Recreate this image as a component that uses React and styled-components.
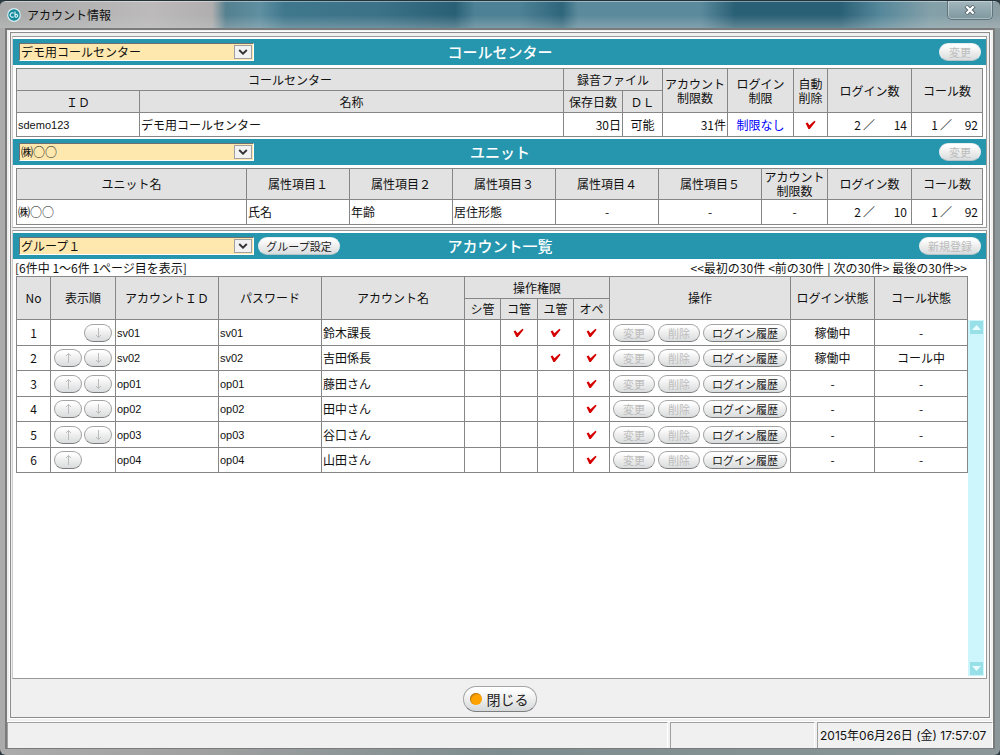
import React, { useState } from "react";
import styled, { createGlobalStyle, css } from "styled-components";

const GlobalStyle = createGlobalStyle`
  * {
    box-sizing: border-box;
  }
  body {
    margin: 0;
    background: #2c3a40;
    color: #111;
    font-family: "Noto Sans CJK JP", sans-serif;
    font-size: 12px;
    line-height: 14px;
  }
  button, select {
    font-family: inherit;
    font-size: 12px;
    line-height: 14px;
  }
`;

const Window = styled.div`
  display: flex;
  flex-direction: column;
  min-height: 100vh;
  padding: 0 5px 6px;
  border-top: 1px solid #24323a;
  border-radius: 6px;
  background:
    linear-gradient(transparent 14px, rgba(200, 205, 205, 0.35) 27px, transparent 27px),
    linear-gradient(90deg, #a9a9a9 0, #bcbaba 150px, #b0aeae 212px, #54808f 226px, #5f8fa1 260px, #3f778d 285px, #3b7288 380px, #2a6076 455px, #4d8195 475px, #4d8195 520px, #2f667c 562px, #5b8a9c 578px, #5b8a9c 700px, #2a6076 735px, #2a6076 840px, #55879a 880px, #83a0a9 930px, #8b9da3 100%) 0 0 / 100% 27px no-repeat,
    linear-gradient(90deg, #ababab 0, #a0a0a0 20%, #7d8c8e 50%, #8b9799 100%);
`;
const TitleBar = styled.header`
  display: flex;
  align-items: center;
  gap: 6px;
  height: 27px;
  padding-left: 2px;
  box-shadow: inset 0 1px 0 rgba(255, 255, 255, 0.4);
`;
const Title = styled.h1`
  flex: 1;
  margin: 0;
  font-size: 12px;
  font-weight: 400;
`;
const CloseBox = styled.button`
  display: flex;
  align-items: center;
  justify-content: center;
  align-self: flex-start;
  width: 46px;
  height: 19px;
  margin-right: 2px;
  padding: 0;
  border: 1px solid #5f747c;
  border-top: none;
  border-radius: 0 0 5px 5px;
  background: linear-gradient(#a3b7bd, #7e979f);
  box-shadow: inset 0 0 0 1px rgba(255, 255, 255, 0.35);
`;
const Client = styled.div`
  display: flex;
  flex: 1;
  flex-direction: column;
  border: 2px solid #7b7b7b;
  border-bottom-width: 1px;
  background: #f0f0f0;
`;
const Frame = styled.main`
  display: flex;
  flex: 1;
  flex-direction: column;
  gap: 2px;
  margin: 2px 3px 3px;
  padding: 3px 2px 0 1px;
  border: 1px solid #8c8c8c;
  box-shadow: 0 0 0 1px #fff;
`;
const Panel = styled.section`
  display: flex;
  flex: ${(props) => (props.$grow ? "1" : "none")};
  flex-direction: column;
  padding-top: 2px;
  border: 1px solid #999;
  border-left-color: #ccc;
  background: #fff;
`;
const Bar = styled.div`
  display: grid;
  grid-template-columns: 1fr auto 1fr;
  align-items: center;
  height: 26px;
  padding: 0 5px 0 6px;
  background: #2596ae;
`;
const BarLeft = styled.div`
  display: flex;
  align-items: center;
  gap: 4px;
`;
const BarTitle = styled.h2`
  margin: 0;
  color: #fff;
  font-size: 15px;
  font-weight: 500;
  line-height: 20px;
`;
const BarRight = styled.div`
  display: flex;
  justify-content: flex-end;
`;
const SelectBox = styled.div`
  display: flex;
  position: relative;
  width: 235px;
  height: 18px;
  border: 1px solid #fff;
  border-top-color: #6f6f6f;
  border-left-color: #6f6f6f;
  background: #ffe8ae;
`;
const Select = styled.select`
  flex: 1;
  min-width: 0;
  padding: 0 20px 0 1px;
  border: none;
  border-radius: 0;
  outline: none;
  appearance: none;
  background: transparent;
  color: #111;
`;
const SelectArrow = styled.span`
  display: flex;
  position: absolute;
  top: 1px;
  right: 1px;
  align-items: center;
  justify-content: center;
  width: 18px;
  height: 14px;
  border: 1px solid #a0a0a0;
  background: #f2f2f2;
  pointer-events: none;
`;
const widths = { arrow: "28px", normal: "42px", group: "82px", entry: "62px", history: "84px" };
const PillButton = styled.button`
  display: inline-flex;
  align-items: center;
  justify-content: center;
  flex: none;
  width: ${(props) => widths[props.$size || "normal"]};
  height: 18px;
  padding: 0;
  border: 1px solid #a4a4a4;
  border-bottom-color: #7d7d7d;
  border-radius: 9px;
  background: linear-gradient(#fff 10%, #eee 50%, #d9dcdd);
  color: #222;
  font-size: 11px;
  white-space: nowrap;
  &:disabled {
    color: #bcbcbc;
  }
  ${(props) =>
    props.$onBar &&
    css`
      border-color: #e8eeee;
      border-bottom-color: #b4c4c8;
    `}
`;
const TableArea = styled.div`
  padding: 3px 3px 2px;
`;
const Table = styled.table`
  width: 100%;
  table-layout: fixed;
  border-collapse: collapse;
`;
const Th = styled.th`
  height: ${(props) => props.$h || 22}px;
  padding: 0;
  border: 1px solid #868686;
  background: #e2e2e2;
  font-weight: 400;
  line-height: 14px;
`;
const Td = styled.td`
  height: ${(props) => props.$h || 25}px;
  padding: 0 1px;
  border: 1px solid #868686;
  background: #fff;
  color: ${(props) => (props.$blue ? "#00f" : "#111")};
  text-align: ${(props) => props.$align || "left"};
  white-space: pre;
`;
const IdCell = styled(Td)`
  font-family: "Liberation Sans", sans-serif;
  font-size: 11px;
`;
const Ratio = styled.span`
  display: grid;
  grid-template-columns: 1fr 14px ${(props) => (props.$wide ? "32px" : "26px")};
  padding-right: 3px;
  text-align: right;
`;
const PageRow = styled.nav`
  display: flex;
  justify-content: space-between;
  height: 17px;
  padding: 2px 19px 0 2px;
`;
const PageLinks = styled.div`
  display: flex;
  gap: 3px;
`;
const PageLink = styled.a`
  color: #111;
  text-decoration: none;
`;
const ListArea = styled.div`
  display: flex;
  flex: 1;
  padding: 0 2px 2px 3px;
`;
const ListTable = styled.div`
  flex: 1;
  min-width: 0;
`;
const ListRow = styled.tr`
  height: 26px;
  &:nth-child(even) {
    height: 25px;
  }
`;
const Actions = styled.div`
  display: flex;
  gap: ${(props) => props.$gap}px;
  justify-content: ${(props) => props.$justify};
  padding: 0 2px;
`;
const ScrollBar = styled.div`
  display: flex;
  flex-direction: column;
  justify-content: space-between;
  align-items: center;
  width: 16px;
  margin-top: 44px;
  padding: 1px 0;
  background: #ccf5fc;
`;
const ScrollButton = styled.button`
  display: flex;
  align-items: center;
  justify-content: center;
  width: 13px;
  height: 13px;
  padding: 0;
  border: none;
  background: #97e0e8;
`;
const Footer = styled.footer`
  display: flex;
  align-items: center;
  justify-content: center;
  height: 36px;
`;
const CloseButton = styled.button`
  display: flex;
  align-items: center;
  gap: 5px;
  height: 26px;
  padding: 0 7px 0 6px;
  border: 1px solid #a4a4a4;
  border-bottom-color: #7d7d7d;
  border-radius: 13px;
  background: linear-gradient(#fff 10%, #eee 50%, #d5d9da);
  color: #222;
  font-size: 14px;
`;
const Dot = styled.span`
  width: 12px;
  height: 12px;
  border-radius: 50%;
  background: #ffa200;
  box-shadow: inset 1px 1px 1px #b87a18;
`;
const StatusBar = styled.div`
  display: grid;
  grid-template-columns: 1fr 145px 176px;
  gap: 2px;
  height: 27px;
  border-top: 1px solid #fff;
`;
const StatusCell = styled.div`
  display: flex;
  align-items: center;
  padding-left: 2px;
  border-top: 1px solid #a0a0a0;
  border-left: 1px solid #a0a0a0;
  border-right: 1px solid #fff;
  font-family: Inter, "Noto Sans CJK JP", sans-serif;
  white-space: nowrap;
`;

const accounts = [
  { id: "sv01", name: "鈴木課長", roles: [0, 1, 1, 1], login: "稼働中", call: "-" },
  { id: "sv02", name: "吉田係長", roles: [0, 0, 1, 1], login: "稼働中", call: "コール中" },
  { id: "op01", name: "藤田さん", roles: [0, 0, 0, 1], login: "-", call: "-" },
  { id: "op02", name: "田中さん", roles: [0, 0, 0, 1], login: "-", call: "-" },
  { id: "op03", name: "谷口さん", roles: [0, 0, 0, 1], login: "-", call: "-" },
  { id: "op04", name: "山田さん", roles: [0, 0, 0, 1], login: "-", call: "-" },
];

const Check = () => (
  <svg width="11" height="10" viewBox="0 0 11 10" role="img" aria-label="可">
    <path d="M0.6 3.2 2.6 2.6 4.4 5.2 9.4 0.8 10.6 1.8 4.8 9 3.4 9z" fill="#d40000" />
  </svg>
);

const Arrow = ({ up }) => (
  <svg width="7" height="12" viewBox="0 0 7 12">
    <path
      d={up ? "M3.5 11V1.5M1 4 3.5 1.5 6 4" : "M3.5 1v9.5M1 8l2.5 2.5L6 8"}
      fill="none"
      stroke="#bbb"
    />
  </svg>
);

const Triangle = ({ down }) => (
  <svg width="9" height="5" viewBox="0 0 9 5">
    <path d={down ? "M0 0h9L4.5 5z" : "M0 5h9L4.5 0z"} fill="#eafcff" />
  </svg>
);

function Cols({ list }) {
  return (
    <colgroup>
      {list.map((width, index) => (
        <col key={index} style={width ? { width } : undefined} />
      ))}
    </colgroup>
  );
}

function Picker({ label, options }) {
  const [value, setValue] = useState(options[0]);
  return (
    <SelectBox>
      <Select aria-label={label} value={value} onChange={(e) => setValue(e.target.value)}>
        {options.map((option) => (
          <option key={option}>{option}</option>
        ))}
      </Select>
      <SelectArrow>
        <svg width="10" height="6" viewBox="0 0 10 6">
          <path d="M1.2 1 5 4.6 8.8 1" fill="none" stroke="#333" strokeWidth="1.9" />
        </svg>
      </SelectArrow>
    </SelectBox>
  );
}

function Count({ now, max, wide }) {
  return (
    <Ratio $wide={wide}>
      <span>{now}</span>
      <span>／</span>
      <span>{max}</span>
    </Ratio>
  );
}

function CenterTable() {
  return (
    <Table>
      <Cols list={[123, 0, 59, 40, 65, 66, 34, 84, 71]} />
      <thead>
        <tr>
          <Th colSpan={2}>コールセンター</Th>
          <Th colSpan={2}>録音ファイル</Th>
          <Th rowSpan={2}>アカウント<br />制限数</Th>
          <Th rowSpan={2}>ログイン<br />制限</Th>
          <Th rowSpan={2}>自動<br />削除</Th>
          <Th rowSpan={2}>ログイン数</Th>
          <Th rowSpan={2}>コール数</Th>
        </tr>
        <tr>
          <Th>ＩＤ</Th>
          <Th>名称</Th>
          <Th>保存日数</Th>
          <Th>ＤＬ</Th>
        </tr>
      </thead>
      <tbody>
        <tr>
          <IdCell $h={24}>sdemo123</IdCell>
          <Td $h={24}>デモ用コールセンター</Td>
          <Td $h={24} $align="right">30日</Td>
          <Td $h={24} $align="center">可能</Td>
          <Td $h={24} $align="right">31件</Td>
          <Td $h={24} $align="center" $blue>制限なし</Td>
          <Td $h={24} $align="center"><Check /></Td>
          <Td $h={24}><Count now={2} max={14} wide /></Td>
          <Td $h={24}><Count now={1} max={92} /></Td>
        </tr>
      </tbody>
    </Table>
  );
}

function UnitTable() {
  return (
    <Table>
      <Cols list={[0, 103, 103, 103, 103, 103, 66, 84, 71]} />
      <thead>
        <tr>
          <Th $h={31}>ユニット名</Th>
          {["１", "２", "３", "４", "５"].map((no) => (
            <Th key={no}>属性項目{no}</Th>
          ))}
          <Th>アカウント<br />制限数</Th>
          <Th>ログイン数</Th>
          <Th>コール数</Th>
        </tr>
      </thead>
      <tbody>
        <tr>
          <Td>㈱○○</Td>
          <Td>氏名</Td>
          <Td>年齢</Td>
          <Td>居住形態</Td>
          <Td $align="center">-</Td>
          <Td $align="center">-</Td>
          <Td $align="center">-</Td>
          <Td><Count now={2} max={10} wide /></Td>
          <Td><Count now={1} max={92} /></Td>
        </tr>
      </tbody>
    </Table>
  );
}

function AccountTable() {
  return (
    <Table>
      <Cols list={[34, 65, 103, 103, 0, 36, 37, 36, 36, 181, 84, 93]} />
      <thead>
        <tr>
          <Th $h={21} rowSpan={2}>No</Th>
          <Th rowSpan={2}>表示順</Th>
          <Th rowSpan={2}>アカウントＩＤ</Th>
          <Th rowSpan={2}>パスワード</Th>
          <Th rowSpan={2}>アカウント名</Th>
          <Th colSpan={4}>操作権限</Th>
          <Th rowSpan={2}>操作</Th>
          <Th rowSpan={2}>ログイン状態</Th>
          <Th rowSpan={2}>コール状態</Th>
        </tr>
        <tr>
          <Th $h={21}>シ管</Th>
          <Th $h={21}>コ管</Th>
          <Th $h={21}>ユ管</Th>
          <Th $h={21}>オペ</Th>
        </tr>
      </thead>
      <tbody>
        {accounts.map((account, index) => (
          <ListRow key={account.id}>
            <Td $h={1} $align="center">{index + 1}</Td>
            <Td $h={1}>
              <Actions $gap={2} $justify={index === 0 ? "flex-end" : "flex-start"}>
                {index > 0 && (
                  <PillButton $size="arrow" disabled aria-label="上へ"><Arrow up /></PillButton>
                )}
                {index < accounts.length - 1 && (
                  <PillButton $size="arrow" disabled aria-label="下へ"><Arrow /></PillButton>
                )}
              </Actions>
            </Td>
            <IdCell $h={1}>{account.id}</IdCell>
            <IdCell $h={1}>{account.id}</IdCell>
            <Td $h={1}>{account.name}</Td>
            {account.roles.map((role, i) => (
              <Td key={i} $h={1} $align="center">{role === 1 && <Check />}</Td>
            ))}
            <Td $h={1}>
              <Actions $gap={3} $justify="flex-start">
                <PillButton disabled>変更</PillButton>
                <PillButton disabled>削除</PillButton>
                <PillButton $size="history">ログイン履歴</PillButton>
              </Actions>
            </Td>
            <Td $h={1} $align="center">{account.login}</Td>
            <Td $h={1} $align="center">{account.call}</Td>
          </ListRow>
        ))}
      </tbody>
    </Table>
  );
}

function App() {
  return (
    <>
      <GlobalStyle />
      <Window>
        <TitleBar>
          <svg width="14" height="14" viewBox="0 0 14 14">
            <circle cx="7" cy="7" r="6.3" fill="#178a9c" stroke="#d8eef0" strokeWidth="1.2" />
            <path d="M6.6 5.2A2.2 2.2 0 1 0 6.6 8.8M8 3.6v5.2M8 7.2a1.4 1.4 0 1 1 0 1.2" fill="none" stroke="#e6fbff" strokeWidth="1.1" />
          </svg>
          <Title>アカウント情報</Title>
          <CloseBox aria-label="ウィンドウを閉じる">
            <svg width="12" height="10" viewBox="0 0 12 10">
              <path d="M2 1l8 8M10 1L2 9" stroke="#4c5c64" strokeWidth="4" />
              <path d="M2.4 1.4l7.2 7.2M9.6 1.4L2.4 8.6" stroke="#fff" strokeWidth="2.2" />
            </svg>
          </CloseBox>
        </TitleBar>
        <Client>
          <Frame>
            <Panel>
              <Bar>
                <BarLeft>
                  <Picker label="コールセンター" options={["デモ用コールセンター"]} />
                </BarLeft>
                <BarTitle>コールセンター</BarTitle>
                <BarRight>
                  <PillButton $onBar disabled>変更</PillButton>
                </BarRight>
              </Bar>
              <TableArea>
                <CenterTable />
              </TableArea>
              <Bar>
                <BarLeft>
                  <Picker label="ユニット" options={["㈱○○"]} />
                </BarLeft>
                <BarTitle>ユニット</BarTitle>
                <BarRight>
                  <PillButton $onBar disabled>変更</PillButton>
                </BarRight>
              </Bar>
              <TableArea>
                <UnitTable />
              </TableArea>
            </Panel>
            <Panel $grow>
              <Bar>
                <BarLeft>
                  <Picker label="グループ" options={["グループ１"]} />
                  <PillButton $onBar $size="group">グループ設定</PillButton>
                </BarLeft>
                <BarTitle>アカウント一覧</BarTitle>
                <BarRight>
                  <PillButton $onBar $size="entry" disabled>新規登録</PillButton>
                </BarRight>
              </Bar>
              <PageRow>
                <span>[6件中 1～6件 1ページ目を表示]</span>
                <PageLinks>
                  <PageLink href="#first">&lt;&lt;最初の30件</PageLink>
                  <PageLink href="#prev">&lt;前の30件</PageLink>
                  <span>|</span>
                  <PageLink href="#next">次の30件&gt;</PageLink>
                  <PageLink href="#last">最後の30件&gt;&gt;</PageLink>
                </PageLinks>
              </PageRow>
              <ListArea>
                <ListTable>
                  <AccountTable />
                </ListTable>
                <ScrollBar>
                  <ScrollButton aria-label="上にスクロール"><Triangle /></ScrollButton>
                  <ScrollButton aria-label="下にスクロール"><Triangle down /></ScrollButton>
                </ScrollBar>
              </ListArea>
            </Panel>
            <Footer>
              <CloseButton>
                <Dot />
                閉じる
              </CloseButton>
            </Footer>
          </Frame>
          <StatusBar>
            <StatusCell />
            <StatusCell />
            <StatusCell>2015年06月26日 (金) 17:57:07</StatusCell>
          </StatusBar>
        </Client>
      </Window>
    </>
  );
}

export default App;
